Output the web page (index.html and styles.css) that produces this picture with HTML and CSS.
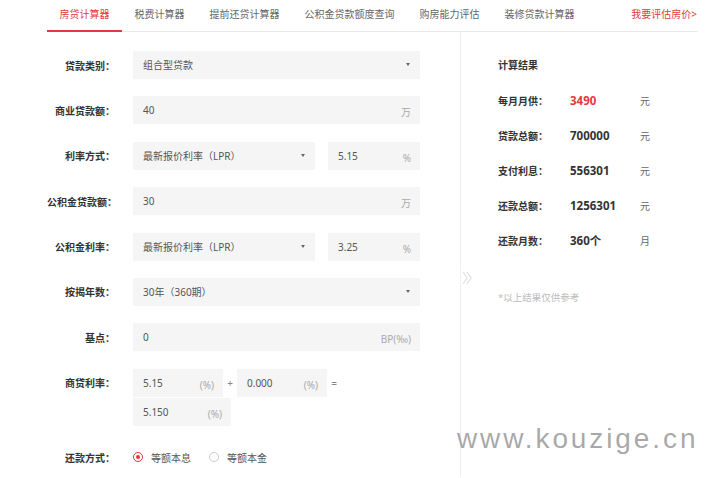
FILE: index.html
```html
<!DOCTYPE html>
<html lang="zh-CN">
<head>
    <meta charset="UTF-8">
    <meta name="viewport" content="width=device-width, initial-scale=1.0">
    <title>房贷计算器</title>
    <link rel="stylesheet" href="styles.css">
</head>
<body>
    <div class="page">
        <div class="tabs">
            <a class="tab active">房贷计算器</a>
            <a class="tab">税费计算器</a>
            <a class="tab">提前还贷计算器</a>
            <a class="tab">公积金贷款额度查询</a>
            <a class="tab">购房能力评估</a>
            <a class="tab">装修贷款计算器</a>
            <a class="tab-link">我要评估房价&gt;</a>
        </div>

        <div class="main">
            <div class="form">
                <div class="row">
                    <div class="label">贷款类别：</div>
                    <div class="field select wide">组合型贷款<span class="arrow"></span></div>
                </div>
                <div class="row">
                    <div class="label">商业贷款额：</div>
                    <div class="field wide">40<span class="unit">万</span></div>
                </div>
                <div class="row">
                    <div class="label">利率方式：</div>
                    <div class="field select mid">最新报价利率（LPR）<span class="arrow"></span></div>
                    <div class="field small">5.15<span class="unit">%</span></div>
                </div>
                <div class="row">
                    <div class="label">公积金贷款额：</div>
                    <div class="field wide">30<span class="unit">万</span></div>
                </div>
                <div class="row">
                    <div class="label">公积金利率：</div>
                    <div class="field select mid">最新报价利率（LPR）<span class="arrow"></span></div>
                    <div class="field small">3.25<span class="unit">%</span></div>
                </div>
                <div class="row">
                    <div class="label">按揭年数：</div>
                    <div class="field select wide">30年（360期）<span class="arrow"></span></div>
                </div>
                <div class="row">
                    <div class="label">基点：</div>
                    <div class="field wide">0<span class="unit">BP(‰)</span></div>
                </div>
                <div class="row rate-row">
                    <div class="label">商贷利率：</div>
                    <div class="rate-sum">
                        <div class="rate-line">
                            <div class="field rate">5.15<span class="unit">(%)</span></div>
                            <span class="op">+</span>
                            <div class="field rate">0.000<span class="unit">(%)</span></div>
                            <span class="op">=</span>
                        </div>
                        <div class="field rate total">5.150<span class="unit">(%)</span></div>
                    </div>
                </div>
                <div class="row">
                    <div class="label">还款方式：</div>
                    <label class="radio checked"><span class="dot"></span>等额本息</label>
                    <label class="radio"><span class="dot"></span>等额本金</label>
                </div>
            </div>

            <div class="result">
                <svg class="chevron" width="11" height="14" viewBox="0 0 11 14">
                    <path d="M1 1l4 6-4 6M5 1l4 6-4 6" fill="none" stroke="#e2e2e2" stroke-width="1.3"/>
                </svg>
                <div class="result-title">计算结果</div>
                <div class="result-row">
                    <span class="r-label">每月月供：</span>
                    <span class="r-value red">3490</span>
                    <span class="r-unit">元</span>
                </div>
                <div class="result-row">
                    <span class="r-label">贷款总额：</span>
                    <span class="r-value">700000</span>
                    <span class="r-unit">元</span>
                </div>
                <div class="result-row">
                    <span class="r-label">支付利息：</span>
                    <span class="r-value">556301</span>
                    <span class="r-unit">元</span>
                </div>
                <div class="result-row">
                    <span class="r-label">还款总额：</span>
                    <span class="r-value">1256301</span>
                    <span class="r-unit">元</span>
                </div>
                <div class="result-row">
                    <span class="r-label">还款月数：</span>
                    <span class="r-value">360个</span>
                    <span class="r-unit">月</span>
                </div>
                <div class="note">*以上结果仅供参考</div>
            </div>
        </div>
    </div>

    <div class="watermark">www.kouzige.cn</div>
</body>
</html>
```

FILE: styles.css
```css
body {
    margin: 0;
    background: #fff;
    color: #333;
    font-family: "Noto Sans", "Noto Sans CJK SC", sans-serif;
    font-size: 10px;
    overflow: hidden;
    height: 478px;
    position: relative;
}

.page {
    width: 651px;
    margin-left: 47px;
}

/* tabs */
.tabs {
    display: flex;
    height: 32px;
    border-bottom: 1px solid #ebebeb;
    box-sizing: border-box;
}

.tab {
    padding: 0 12.5px 2px;
    line-height: 28px;
    font-size: 10px;
    color: #666;
    border-bottom: 2px solid transparent;
    margin-bottom: -1px;
    white-space: nowrap;
}

.tab.active {
    color: #e4393c;
    border-bottom-color: #e4393c;
}

.tab-link {
    margin-left: auto;
    line-height: 28px;
    color: #e4393c;
    padding-right: 1px;
}

.main {
    display: flex;
    height: 445px;
}

/* form */
.form {
    width: 413px;
    padding-top: 19px;
    box-sizing: border-box;
}

.row {
    display: flex;
    align-items: center;
    height: 28px;
    margin-bottom: 17.4px;
}

.label {
    width: 68px;
    margin-right: 18px;
    text-align: right;
    color: #333;
    font-weight: 600;
    white-space: nowrap;
}

.field {
    position: relative;
    height: 28px;
    line-height: 28px;
    padding-left: 10px;
    box-sizing: border-box;
    background: #f5f5f5;
    color: #555;
}

.field.wide { width: 287px; }
.field.mid { width: 182px; margin-right: 13px; }
.field.small { width: 92px; }
.field.rate { width: 90px; }
.field.rate.total { width: 98px; margin-top: 1px; }

.unit {
    position: absolute;
    right: 9px;
    top: 2px;
    color: #aaa;
}

.arrow {
    position: absolute;
    right: 10px;
    top: 12px;
    border-left: 2.5px solid transparent;
    border-right: 2.5px solid transparent;
    border-top: 3.5px solid #666;
}

.rate-row {
    height: 57px;
    align-items: flex-start;
}

.rate-row .label {
    line-height: 28px;
}

.rate-line {
    display: flex;
    align-items: center;
}

.op {
    width: 14px;
    text-align: center;
    color: #888;
}

.radio {
    display: flex;
    align-items: center;
    color: #555;
    margin-right: 18px;
}

.radio .dot {
    width: 10px;
    height: 10px;
    border: 1px solid #ccc;
    border-radius: 50%;
    box-sizing: border-box;
    margin-right: 8px;
    position: relative;
}

.radio.checked .dot {
    border: 1.5px solid #e4393c;
}

.radio.checked .dot::after {
    content: "";
    position: absolute;
    left: 1.5px;
    top: 1.5px;
    width: 4px;
    height: 4px;
    border-radius: 50%;
    background: #e4393c;
}

/* result */
.result {
    flex: 1;
    position: relative;
    border-left: 1px solid #eeeeee;
    padding: 24px 0 0 37px;
}

.chevron {
    position: absolute;
    left: 1px;
    top: 239px;
}

.result-title {
    line-height: 18px;
    font-weight: bold;
    margin-bottom: 8.5px;
}

.result-row {
    display: flex;
    align-items: center;
    height: 35px;
}

.r-label {
    width: 72px;
    font-weight: 600;
}

.r-value {
    width: 70px;
    font-size: 11.5px;
    font-weight: bold;
    color: #333;
}

.r-value.red {
    color: #e4393c;
}

.r-unit {
    color: #666;
}

.note {
    margin-top: 32px;
    font-size: 9.5px;
    color: #bbb;
}

.watermark {
    position: absolute;
    left: 457px;
    top: 423px;
    font-family: "Liberation Sans", Arial, sans-serif;
    font-size: 28px;
    letter-spacing: 2.9px;
    color: rgba(140, 140, 140, 0.75);
    pointer-events: none;
}
```
